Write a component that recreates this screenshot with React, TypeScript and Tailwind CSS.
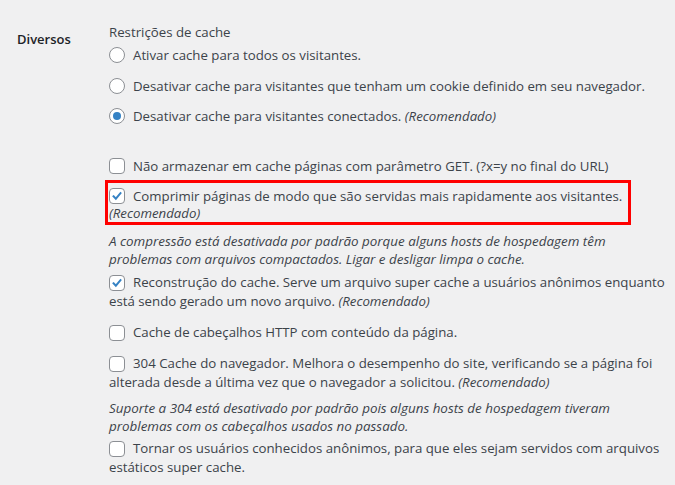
import React from "react";

function Radio({ checked = false }: { checked?: boolean }) {
  return (
    <span className="mr-[8px] inline-flex h-4 w-4 shrink-0 translate-y-[-1px] items-center justify-center rounded-full border border-[#8c8f94] bg-white align-middle">
      {checked && <span className="h-2 w-2 rounded-full bg-[#3582c4]" />}
    </span>
  );
}

function Check({ checked = false }: { checked?: boolean }) {
  return (
    <span className="mr-[8px] inline-flex h-4 w-4 shrink-0 translate-y-[-1px] items-center justify-center rounded-[4px] border border-[#8c8f94] bg-white align-middle">
      {checked && (
        <svg viewBox="0 0 16 16" className="h-4 w-4" fill="none" stroke="#3582c4" strokeWidth="2.2" strokeLinecap="square">
          <path d="M4 8.3l2.7 2.8L12 4.8" />
        </svg>
      )}
    </span>
  );
}

const rec = <i>(Recomendado)</i>;

export default function App() {
  return (
    <div className="min-h-[485px] bg-[#f0f0f1] font-['Open_Sans',sans-serif] text-[13.25px] leading-[19px] text-[#3c434a]">
      <div className="flex">
        <div className="w-[109px] shrink-0 pl-[17px] pt-[30px] text-[13px] font-semibold text-[#1d2327]">Diversos</div>
        <div className="w-[566px] whitespace-nowrap pt-[23px]">
          <div>Restrições de cache</div>
          <div className="mt-[4px]">
            <label className="block"><Radio />Ativar cache para todos os visitantes.</label>
            <label className="mt-[12px] block"><Radio />Desativar cache para visitantes que tenham um cookie definido em seu navegador.</label>
            <label className="mt-[11px] block"><Radio checked />Desativar cache para visitantes conectados. {rec}</label>
          </div>

          <label className="mt-[31px] block"><Check />Não armazenar em cache páginas com parâmetro GET. (?x=y no final do URL)</label>

          <div className="-ml-[4px] mt-[4px] w-[526px] border-[3px] border-[#ff0000] pl-[1px] pt-[5px] leading-[17px]">
            <label className="block"><Check checked />Comprimir páginas de modo que são servidas mais rapidamente aos visitantes.<br />{rec}</label>
          </div>

          <p className="mt-[7px] text-[13.4px] italic leading-[18px]">
            A compressão está desativada por padrão porque alguns hosts de hospedagem têm<br />
            problemas com arquivos compactados. Ligar e desligar limpa o cache.
          </p>

          <label className="mt-[5px] block"><Check checked />Reconstrução do cache. Serve um arquivo super cache a usuários anônimos enquanto<br />está sendo gerado um novo arquivo. {rec}</label>

          <label className="mt-[12px] block"><Check />Cache de cabeçalhos HTTP com conteúdo da página.</label>

          <label className="mt-[12px] block"><Check />304 Cache do navegador. Melhora o desempenho do site, verificando se a página foi<br />alterada desde a última vez que o navegador a solicitou. {rec}</label>

          <p className="mt-[7px] text-[13.4px] italic leading-[18px]">
            Suporte a 304 está desativado por padrão pois alguns hosts de hospedagem tiveram<br />
            problemas com os cabeçalhos usados no passado.
          </p>

          <label className="mt-[4px] block"><Check />Tornar os usuários conhecidos anônimos, para que eles sejam servidos com arquivos<br />estáticos super cache.</label>
        </div>
      </div>
    </div>
  );
}
